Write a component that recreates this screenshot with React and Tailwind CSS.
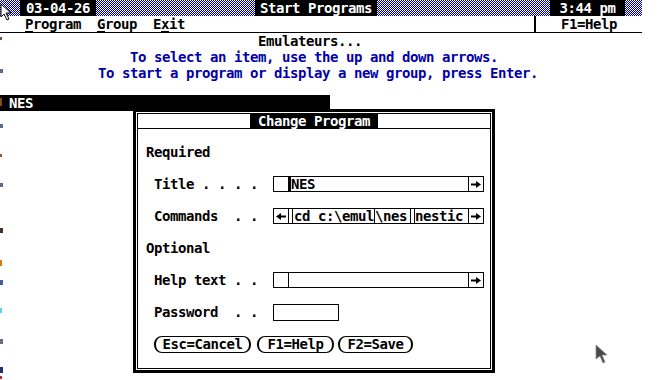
import React from 'react';

const ArrowRight = () => (
  <svg width="10" height="7" viewBox="0 0 10 7" className="block">
    <rect x="0" y="2.5" width="6" height="2" fill="#000" />
    <polygon points="5,0 10,3.5 5,7" fill="#000" />
  </svg>
);

const ArrowLeft = () => (
  <svg width="10" height="7" viewBox="0 0 10 7" className="block">
    <rect x="4" y="2.5" width="6" height="2" fill="#000" />
    <polygon points="5,0 0,3.5 5,7" fill="#000" />
  </svg>
);

const Field = ({ children, left = null, width = 'w-[211px]' }) => (
  <div className={`flex h-4 ${width} border border-black`}>
    <div className="flex w-[15px] items-center justify-center border-r border-black">{left}</div>
    <div className="flex flex-1 items-center overflow-hidden">{children}</div>
    <div className="flex w-[15px] items-center justify-center border-l border-black">
      <ArrowRight />
    </div>
  </div>
);

const Row = ({ label, children }) => (
  <div className="flex h-4 items-center">
    <span className="ml-2 w-[104px] whitespace-pre">{label}</span>
    <div className="ml-[15px]">{children}</div>
  </div>
);

const Button = ({ label, w }) => (
  <div className={`flex h-[17px] ${w} items-center justify-center rounded-[8px] border border-x-2 border-black`}>
    {label}
  </div>
);

export default function App() {
  return (
    <div className="relative h-[380px] w-[663px] overflow-hidden bg-white text-[14px] font-bold leading-4 tracking-[-0.43px] text-black font-['DejaVu_Sans_Mono','Liberation_Mono',monospace]">
      {/* title bar */}
      <div className="flex h-4 w-[642px] bg-[repeating-conic-gradient(#0000aa_0_25%,#ffffff_0_50%)] bg-size-[2px_2px]">
        <div className="ml-[20px] w-[76px] bg-black text-center text-white">03-04-26</div>
        <div className="ml-[159px] w-[122px] bg-black text-center text-white">Start Programs</div>
        <div className="ml-[173px] w-[75px] bg-black text-center text-white">3:44 pm</div>
      </div>

      {/* menu bar */}
      <div className="flex h-[17px] w-[642px] border-b border-black">
        <span className="ml-[25px]"><span className="underline decoration-1 underline-offset-2">P</span>rogram</span>
        <span className="ml-4"><span className="underline decoration-1 underline-offset-2">G</span>roup</span>
        <span className="ml-4">E<span className="underline decoration-1 underline-offset-2">x</span>it</span>
        <div className="ml-auto w-[108px] border-l-2 border-black text-center">F1=Help</div>
      </div>

      {/* group content */}
      <div className="h-4 pl-[258px]">Emulateurs...</div>
      <div className="h-4 pl-[130px] text-[#0000aa]">To select an item, use the up and down arrows.</div>
      <div className="h-4 pl-[98px] text-[#0000aa]">To start a program or display a new group, press Enter.</div>
      <div className="mt-[14px] h-4 w-[330px] bg-black pl-[9px] text-white">NES</div>

      {/* left edge leftovers */}
      <span className="absolute left-0 top-[37px] h-[3px] w-[2px] bg-[#8a4a20]" />
      <span className="absolute left-0 top-[69px] h-[4px] w-[3px] bg-[#5a6a90]" />
      <span className="absolute left-0 top-[98px] h-[8px] w-[2px] bg-[#8a4a20]" />
      <span className="absolute left-0 top-[124px] h-[4px] w-[3px] bg-[#5a6a90]" />
      <span className="absolute left-0 top-[154px] h-[3px] w-[2px] bg-[#a0522d]" />
      <span className="absolute left-0 top-[183px] h-[4px] w-[3px] bg-[#5a6a90]" />
      <span className="absolute left-0 top-[228px] h-[5px] w-[3px] bg-[#4a3020]" />
      <span className="absolute left-0 top-[260px] h-[6px] w-[2px] bg-[#d07a20]" />
      <span className="absolute left-0 top-[280px] h-[5px] w-[3px] bg-[#4060a0]" />
      <span className="absolute left-0 top-[308px] h-[5px] w-[2px] bg-[#60d0f0]" />
      <span className="absolute left-0 top-[339px] h-[5px] w-[3px] bg-[#607080]" />
      <span className="absolute left-0 top-[367px] h-[6px] w-[3px] bg-[#203070]" />
      <span className="absolute left-0 top-[376px] h-[3px] w-[2px] bg-[#e02020]" />

      {/* dialog */}
      <div className="absolute left-[133px] top-[109px] flex h-[264px] w-[362px] border-[3px] border-black bg-white p-px">
        <div className="flex flex-1 flex-col border border-black">
          <div className="flex h-[15px] justify-center border-b border-black">
            <div className="h-[14px] bg-black px-2 leading-[14px] text-white">Change Program</div>
          </div>
          <div className="flex flex-col gap-4 pl-[8px] pt-[15px]">
            <div className="h-4">Required</div>
            <Row label="Title . . . .">
              <Field>
                <span className="h-full w-[2px] bg-black" />
                <span>NES</span>
              </Field>
            </Row>
            <Row label="Commands  . .">
              <Field left={<ArrowLeft />}>
                <span className="ml-[3px] h-full w-px bg-black" />
                <span className="ml-px whitespace-pre">cd c:\emul</span>
                <span className="border-l border-black">\nes</span>
                <span className="ml-[3px] h-full w-[5px] border-x border-black" />
                <span>nestic</span>
              </Field>
            </Row>
            <div className="h-4">Optional</div>
            <Row label="Help text . .">
              <Field />
            </Row>
            <Row label="Password  . .">
              <div className="h-[17px] w-[66px] border border-black" />
            </Row>
            <div className="flex h-4 items-center pl-2">
              <Button label="Esc=Cancel" w="w-[97px]" />
              <div className="ml-[6px]"><Button label="F1=Help" w="w-[77px]" /></div>
              <div className="ml-[4px]"><Button label="F2=Save" w="w-[75px]" /></div>
            </div>
          </div>
        </div>
      </div>

      {/* mouse pointers */}
      <svg className="absolute left-0 top-[3px]" width="13" height="18" viewBox="0 0 13 18">
        <path d="M1 1 L1 14 L4 11 L7 17 L9 16 L6 10 L11 10 Z" fill="#fff" stroke="#000" strokeWidth="1" />
      </svg>
      <svg className="absolute left-[595px] top-[344px]" width="14" height="20" viewBox="0 0 14 20">
        <path d="M1 1 L1 15 L5 12 L8 19 L10 18 L7 11 L12 11 Z" fill="#4a4a4a" stroke="#8a8a8a" strokeWidth="0.8" />
      </svg>
    </div>
  );
}
